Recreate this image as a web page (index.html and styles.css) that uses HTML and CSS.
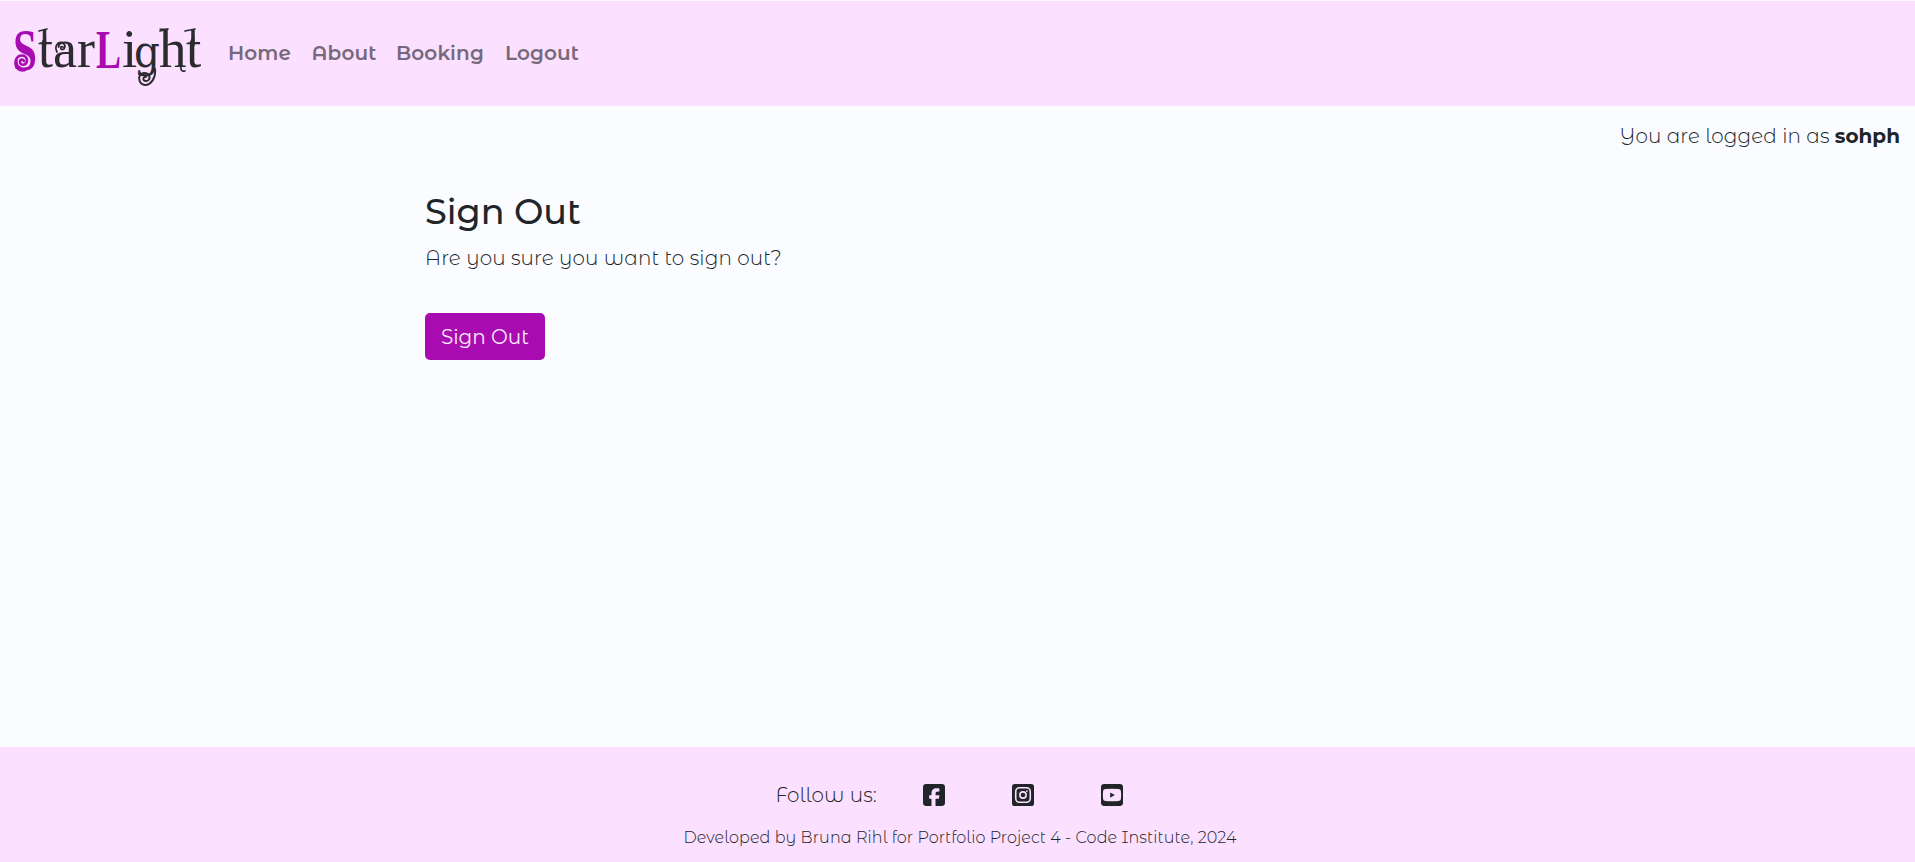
FILE: index.html
```html
<!DOCTYPE html>
<html lang="en">
<head>
<meta charset="utf-8">
<title>StarLight</title>
<link rel="stylesheet" href="styles.css">
</head>
<body>
<header class="navbar">
  <a class="brand" href="#">
    <svg width="204" height="104" viewBox="0 1 204 104">
      <text class="logo accent big" x="13" y="69" textLength="24" lengthAdjust="spacingAndGlyphs">S</text>
      <text class="logo" x="38" y="66" textLength="57" lengthAdjust="spacingAndGlyphs">tar</text>
      <text class="logo accent" x="96" y="67" textLength="25" lengthAdjust="spacingAndGlyphs">L</text>
      <text class="logo" y="66"><tspan x="122">i</tspan><tspan class="round" x="134">g</tspan><tspan x="159">h</tspan><tspan x="186">t</tspan></text>
      <path class="curl accent-line" d="M25 69C18 71 14 65 16 59C18 53 26 53 27 59C27 65 20 65 20 61C20 58 23 58 24 60"/>
      <path class="curl" d="M155 68C156 77 151 84 145 84C138 83 137 73 144 72C151 72 151 80 146 80C142 80 143 75 146 76"/>
      <path class="curl thin" d="M57 51C54 45 58 40 63 42C67 45 64 50 61 48C60 46 61 45 63 46"/>
      <path class="curl stem" d="M44.500 29v16M193 29v16"/>
      <path class="curl thin" d="M39 30l8-2M160 30l8-2M185 30l10-2M181 65q-1 6 4 5"/>
    </svg>
  </a>
  <nav class="links">
    <a class="link-home" href="#">Home</a>
    <a class="link-about" href="#">About</a>
    <a class="link-booking" href="#">Booking</a>
    <a class="link-logout" href="#">Logout</a>
  </nav>
</header>
<p class="status"><span>You are logged in as</span> <strong>sohph</strong></p>
<main class="content">
  <h1>Sign Out</h1>
  <p class="question">Are you sure you want to sign out?</p>
  <button class="button" type="submit">Sign Out</button>
</main>
<footer class="footer">
  <div class="social">
    <span class="follow">Follow us:</span>
    <svg class="icon" viewBox="0 0 448 448"><path fill-rule="evenodd" d="M64 0H384a64 64 0 0 1 64 64V384a64 64 0 0 1-64 64H255V300h68l12-70h-80v-25c0-37 15-51 52-51 12 0 21 0 27 1V91c-10-3-35-6-50-6-76 0-111 36-111 114v31h-47v70h47V448H64a64 64 0 0 1-64-64V64A64 64 0 0 1 64 0Z"/></svg>
    <svg class="icon" viewBox="0 0 448 448"><rect width="448" height="448" rx="58"/><rect class="cut" x="76" y="76" width="296" height="296" rx="76"/><circle class="cut" cx="224" cy="224" r="64"/><circle class="dot" cx="303" cy="145" r="18"/></svg>
    <svg class="icon" viewBox="0 0 448 448"><path fill-rule="evenodd" d="M64 0H384a64 64 0 0 1 64 64V384a64 64 0 0 1-64 64H64a64 64 0 0 1-64-64V64A64 64 0 0 1 64 0ZM92 101Q47 103 42 145Q34 224 42 303Q47 342 92 346Q224 356 356 346Q401 342 406 303Q414 224 406 145Q401 103 356 101Q224 92 92 101ZM187 172L282 224L187 278Z"/></svg>
  </div>
  <p class="credit">Developed by Bruna Rihl for Portfolio Project 4 - Code Institute, 2024</p>
</footer>
</body>
</html>
```
FILE: styles.css
```css
* { box-sizing: border-box; }
body {
  margin: 0;
  height: 862px;
  display: flex;
  flex-direction: column;
  overflow: hidden;
  background: #fafcff;
  color: #212529;
  font: 300 20px/30px "Montserrat Alternates", Inter, "Open Sans", sans-serif;
}
h1, p { margin: 0; font-weight: 300; }
span, strong, a, h1, p, button { white-space: nowrap; }
.navbar {
  height: 106px;
  flex: none;
  display: flex;
  align-items: center;
  background: #fbe0ff;
  border-top: 1px solid #fdf5ff;
}
.brand { display: flex; width: 228px; }
.logo { font: 400 55px "Liberation Serif", serif; fill: #2b2b30; }
.big { font-size: 60px; }
.round { font: 400 45px "DejaVu Serif Condensed", "DejaVu Serif", serif; }
.accent { fill: #a80bb0; font-weight: 700; }
.curl { fill: none; stroke: #2b2b30; stroke-width: 2; stroke-linecap: round; stroke-linejoin: round; }
.accent-line { stroke: #a80bb0; stroke-width: 2.6; }
.thin { stroke-width: 1.7; }
.stem { stroke-width: 3.5; stroke-linecap: butt; }
.links { display: flex; padding-bottom: 2px; }
.links a { color: #76697b; font-weight: 600; text-decoration: none; letter-spacing: .12px; }
.link-home { width: 83.500px; }
.link-about { width: 84.500px; }
.link-booking { width: 109px; }
.status { padding: 15px 15px 0 0; text-align: right; letter-spacing: .11px; }
.status strong { font-weight: 700; letter-spacing: 0; }
.content { flex: 1; padding: 39px 0 0 425px; }
h1 { font-size: 35px; line-height: 44px; font-weight: 500; }
.question { margin-top: 9px; letter-spacing: .11px; }
.button {
  display: block;
  width: 120px;
  height: 47px;
  margin-top: 40px;
  padding: 0;
  border: 0;
  border-radius: 5px;
  background: #a80bb0;
  color: #fbe9ff;
  font: inherit;
  font-weight: 400;
}
.footer { height: 115px; flex: none; padding-top: 33px; background: #fbe0ff; }
.social { display: flex; align-items: center; padding-left: 775.500px; }
.follow { width: 147.500px; letter-spacing: .11px; }
.icon { width: 22px; height: 22px; margin-right: 67px; fill: #212529; }
.cut { fill: none; stroke: #fbe0ff; stroke-width: 32; }
.dot { fill: #fbe0ff; }
.credit { padding: 16px 0 0 683.500px; font-size: 16px; line-height: 24px; letter-spacing: .1px; }
```
